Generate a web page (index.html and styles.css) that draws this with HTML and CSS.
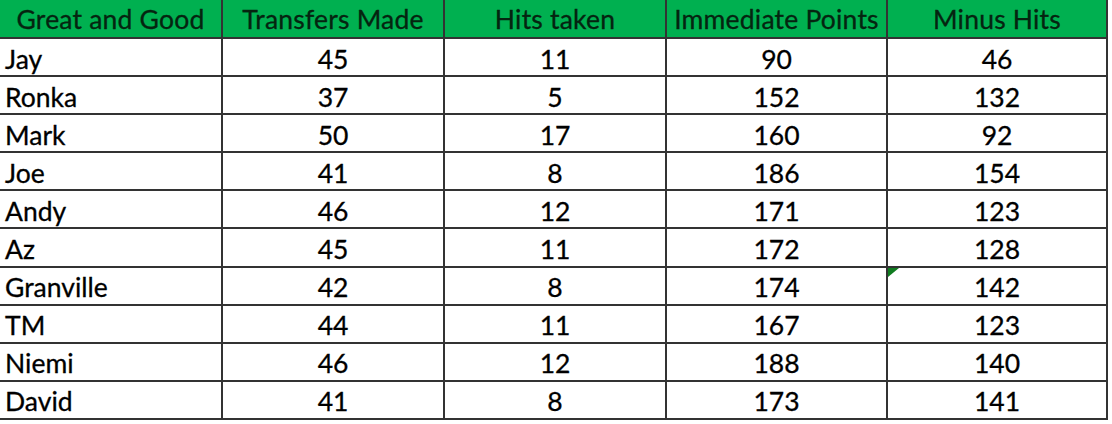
FILE: index.html
```html
<!DOCTYPE html>
<html>
<head>
<meta charset="utf-8">
<link rel="stylesheet" href="styles.css">
</head>
<body>
<div class="sheet">
  <div class="cell head">Great and Good</div>
  <div class="cell head">Transfers Made</div>
  <div class="cell head">Hits taken</div>
  <div class="cell head">Immediate Points</div>
  <div class="cell head">Minus Hits</div>

  <div class="cell name">Jay</div><div class="cell">45</div><div class="cell">11</div><div class="cell">90</div><div class="cell">46</div>
  <div class="cell name">Ronka</div><div class="cell">37</div><div class="cell">5</div><div class="cell">152</div><div class="cell">132</div>
  <div class="cell name">Mark</div><div class="cell">50</div><div class="cell">17</div><div class="cell">160</div><div class="cell">92</div>
  <div class="cell name">Joe</div><div class="cell">41</div><div class="cell">8</div><div class="cell">186</div><div class="cell">154</div>
  <div class="cell name">Andy</div><div class="cell">46</div><div class="cell">12</div><div class="cell">171</div><div class="cell">123</div>
  <div class="cell name">Az</div><div class="cell">45</div><div class="cell">11</div><div class="cell">172</div><div class="cell">128</div>
  <div class="cell name">Granville</div><div class="cell">42</div><div class="cell">8</div><div class="cell">174</div><div class="cell flagged">142</div>
  <div class="cell name">TM</div><div class="cell">44</div><div class="cell">11</div><div class="cell">167</div><div class="cell">123</div>
  <div class="cell name">Niemi</div><div class="cell">46</div><div class="cell">12</div><div class="cell">188</div><div class="cell">140</div>
  <div class="cell name">David</div><div class="cell">41</div><div class="cell">8</div><div class="cell">173</div><div class="cell">141</div>
</div>
</body>
</html>
```
FILE: styles.css
```css
html, body {
  margin: 0;
  padding: 0;
  background: #ffffff;
}

body {
  width: 1112px;
  height: 424px;
  overflow: hidden;
}

.sheet {
  display: grid;
  grid-template-columns: 221px 220px 220px 219px 218px;
  grid-template-rows: 37px repeat(10, 36.1px);
  gap: 2px;
  padding: 2px;
  margin: -2px 0 0 -2px;
  width: fit-content;
  background: #333333;
  font-family: Lato, "Liberation Sans", sans-serif;
  font-size: 26.5px;
  color: #000;
  -webkit-text-stroke: 0.3px currentColor;
}

.cell {
  background: #ffffff;
  display: flex;
  align-items: flex-end;
  justify-content: center;
  padding-bottom: 3px;
  box-sizing: border-box;
  line-height: 1;
  white-space: nowrap;
}

.head {
  background: #00b050;
  color: #052410;
  padding-bottom: 5px;
  letter-spacing: 0.2px;
}

.name {
  justify-content: flex-start;
  padding-left: 5px;
}

.flagged {
  position: relative;
}

.flagged::before {
  content: "";
  position: absolute;
  top: 0;
  left: 0;
  width: 0;
  height: 0;
  border-top: 9px solid #107c20;
  border-right: 11px solid transparent;
}
```
